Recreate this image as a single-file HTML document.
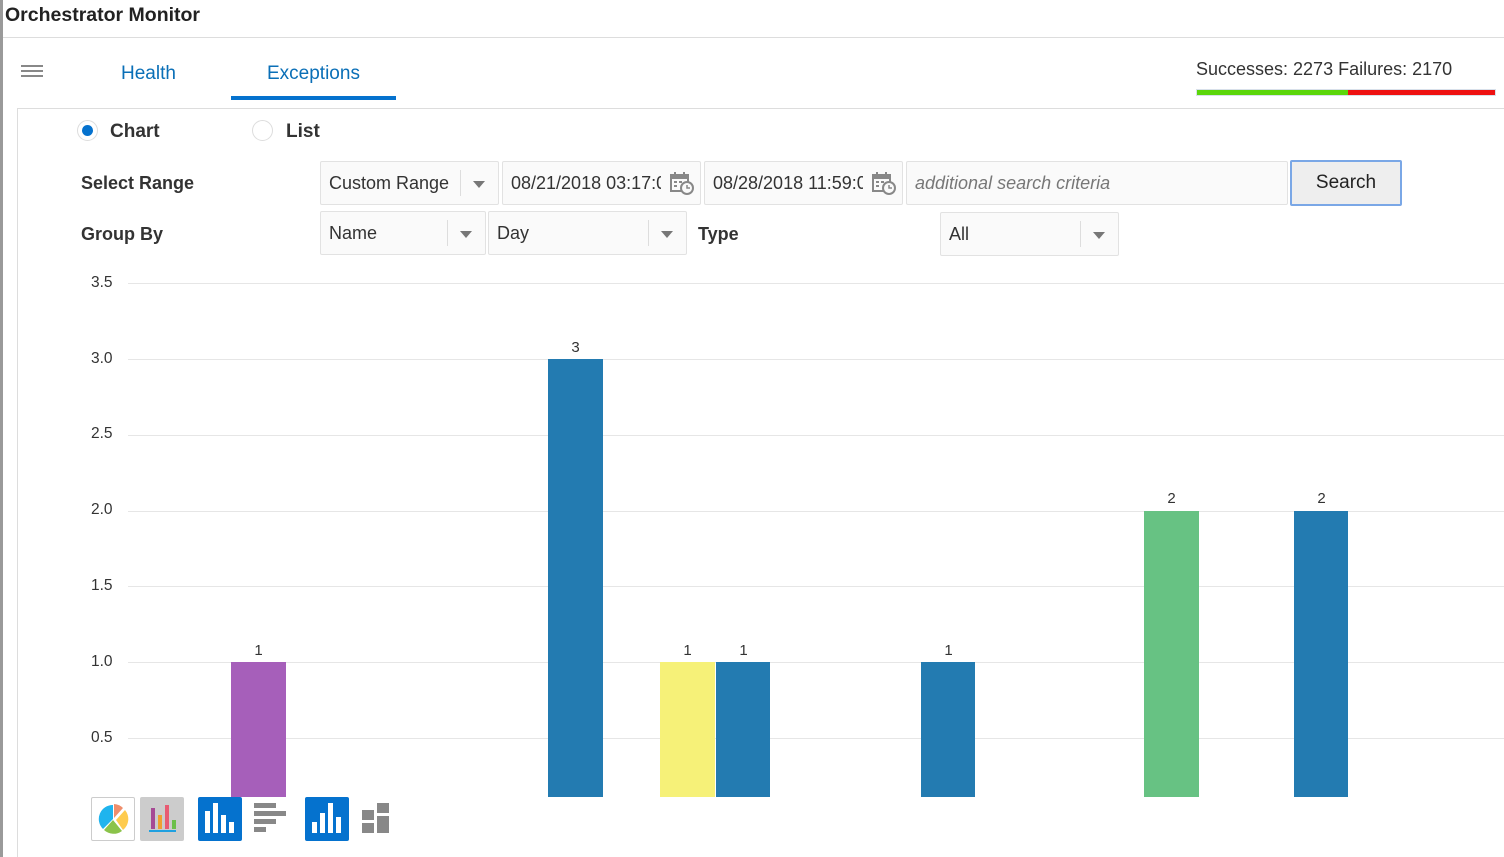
<!DOCTYPE html>
<html><head><meta charset="utf-8"><style>
*{box-sizing:border-box;margin:0;padding:0}
body{width:1504px;height:857px;overflow:hidden;background:#fff;font-family:"Liberation Sans",Arial,sans-serif;position:relative;color:#333}
.a{position:absolute}
.box{position:absolute;border:1px solid #e2e2e2;background:#fafafa;border-radius:2px;font-size:18px;color:#333;padding-left:8px;line-height:42px;white-space:nowrap;overflow:hidden}
.clip{display:inline-block;width:150px;overflow:hidden;vertical-align:top}
.dd{position:absolute;top:8px;bottom:8px;width:1px;background:#ddd}
.tri{position:absolute;width:0;height:0;border-left:6px solid transparent;border-right:6px solid transparent;border-top:7px solid #777}
.lbl{position:absolute;font-size:18px;font-weight:bold;color:#333}
.yl{position:absolute;left:91px;font-size:15.5px;color:#333}
.gl{position:absolute;left:128px;right:0;height:1px;background:#e6e6e6}
.bar{position:absolute;bottom:60px}
.bl{position:absolute;font-size:15px;color:#333;width:55px;text-align:center}
</style></head><body>
<div class="a" style="left:0;top:0;width:3px;height:857px;background:#9a9a9a"></div>
<div class="a" style="left:5px;top:4px;font-size:19.5px;font-weight:bold;color:#222">Orchestrator Monitor</div>
<div class="a" style="left:3px;top:37px;right:0;height:1px;background:#ddd"></div>
<div class="a" style="left:21px;top:65px;width:22px;height:2px;background:#888;box-shadow:0 5px 0 #888,0 10px 0 #888"></div>
<div class="a" style="left:121px;top:63px;font-size:19px;color:#0a6fb7">Health</div>
<div class="a" style="left:267px;top:63px;font-size:19px;color:#0a6fb7">Exceptions</div>
<div class="a" style="left:231px;top:96px;width:165px;height:4px;background:#0572ce"></div>
<div class="a" style="left:1196px;top:59px;font-size:18px;color:#333">Successes: 2273 Failures: 2170</div>
<div class="a" style="left:1196px;top:89px;width:152px;height:7px;background:#5bd60a;border:1px solid #d8e0ea;border-right:none"></div>
<div class="a" style="left:1348px;top:89px;width:148px;height:7px;background:#ee1111;border:1px solid #d8e0ea;border-left:none"></div>
<div class="a" style="left:17px;top:108px;right:0;height:1px;background:#ddd"></div>
<div class="a" style="left:17px;top:108px;width:1px;height:749px;background:#ddd"></div>
<div class="a" style="left:77px;top:120px;width:21px;height:21px;border-radius:50%;border:1px solid #ddd;background:#fff"></div>
<div class="a" style="left:82px;top:125px;width:11px;height:11px;border-radius:50%;background:#0572ce"></div>
<div class="lbl" style="left:110px;top:121px;font-size:19px">Chart</div>
<div class="a" style="left:252px;top:120px;width:21px;height:21px;border-radius:50%;border:1px solid #ddd;background:#fff"></div>
<div class="lbl" style="left:286px;top:121px;font-size:19px">List</div>
<div class="lbl" style="left:81px;top:173px">Select Range</div>
<div class="lbl" style="left:81px;top:224px">Group By</div>
<div class="lbl" style="left:698px;top:224px">Type</div>
<div class="box" style="left:320px;top:161px;width:179px;height:44px">Custom Range<div class="dd" style="left:139px"></div><div class="tri" style="left:152px;top:19px"></div></div>
<div class="box" style="left:502px;top:161px;width:199px;height:44px"><span class="clip">08/21/2018 03:17:00</span><svg class="a" style="left:167px;top:9px" width="25" height="25" viewBox="0 0 25 25"><rect x="1" y="4" width="17" height="16" fill="none" stroke="#888" stroke-width="2"/><rect x="1" y="4" width="17" height="4" fill="#888"/><path d="M5 1v5M14 1v5M4 11h3M9 11h3M4 15h3" stroke="#888" stroke-width="2"/><circle cx="17" cy="17" r="6" fill="#fafafa" stroke="#888" stroke-width="2"/><path d="M17 14v3h3" stroke="#888" stroke-width="1.5" fill="none"/></svg></div>
<div class="box" style="left:704px;top:161px;width:199px;height:44px"><span class="clip">08/28/2018 11:59:00</span><svg class="a" style="left:167px;top:9px" width="25" height="25" viewBox="0 0 25 25"><rect x="1" y="4" width="17" height="16" fill="none" stroke="#888" stroke-width="2"/><rect x="1" y="4" width="17" height="4" fill="#888"/><path d="M5 1v5M14 1v5M4 11h3M9 11h3M4 15h3" stroke="#888" stroke-width="2"/><circle cx="17" cy="17" r="6" fill="#fafafa" stroke="#888" stroke-width="2"/><path d="M17 14v3h3" stroke="#888" stroke-width="1.5" fill="none"/></svg></div>
<div class="box" style="left:906px;top:161px;width:382px;height:44px;font-style:italic;color:#777">additional search criteria</div>
<div class="a" style="left:1290px;top:160px;width:112px;height:46px;border:2px solid #7aa7e6;background:#eee;border-radius:2px;font-size:19px;color:#222;text-align:center;line-height:42px">Search</div>
<div class="box" style="left:320px;top:211px;width:166px;height:44px">Name<div class="dd" style="left:126px"></div><div class="tri" style="left:139px;top:19px"></div></div>
<div class="box" style="left:488px;top:211px;width:199px;height:44px">Day<div class="dd" style="left:159px"></div><div class="tri" style="left:172px;top:19px"></div></div>
<div class="box" style="left:940px;top:212px;width:179px;height:44px">All<div class="dd" style="left:139px"></div><div class="tri" style="left:152px;top:19px"></div></div>

<div class="gl" style="top:283px"></div><div class="yl" style="top:274px">3.5</div>
<div class="gl" style="top:359px"></div><div class="yl" style="top:350px">3.0</div>
<div class="gl" style="top:435px"></div><div class="yl" style="top:425px">2.5</div>
<div class="gl" style="top:511px"></div><div class="yl" style="top:501px">2.0</div>
<div class="gl" style="top:586px"></div><div class="yl" style="top:577px">1.5</div>
<div class="gl" style="top:662px"></div><div class="yl" style="top:653px">1.0</div>
<div class="gl" style="top:738px"></div><div class="yl" style="top:729px">0.5</div>

<div class="bar" style="left:231px;width:55px;top:662px;background:#a65fba"></div><div class="bl" style="left:231px;top:642px">1</div>
<div class="bar" style="left:548px;width:55px;top:359px;background:#237bb1"></div><div class="bl" style="left:548px;top:339px">3</div>
<div class="bar" style="left:660px;width:55px;top:662px;background:#f6f178"></div><div class="bl" style="left:660px;top:642px">1</div>
<div class="bar" style="left:716px;width:54px;top:662px;background:#237bb1"></div><div class="bl" style="left:716px;top:642px">1</div>
<div class="bar" style="left:921px;width:54px;top:662px;background:#237bb1"></div><div class="bl" style="left:921px;top:642px">1</div>
<div class="bar" style="left:1144px;width:55px;top:511px;background:#67c283"></div><div class="bl" style="left:1144px;top:490px">2</div>
<div class="bar" style="left:1294px;width:54px;top:511px;background:#237bb1"></div><div class="bl" style="left:1294px;top:490px">2</div>

<div class="a" style="left:91px;top:797px;width:44px;height:44px;border:1px solid #ccc;border-radius:2px;background:#fff"></div>
<svg class="a" style="left:97px;top:803px" width="32" height="32" viewBox="0 0 32 32"><path d="M16 16L16 2A14 14 0 0 0 6 26Z" fill="#1fb4ee"/><path d="M17 15L17 1A14 14 0 0 1 26 5Z" fill="#ef8e6c"/><path d="M19 17L28 7A14 14 0 0 1 26 27Z" fill="#fecb4e"/><path d="M16 17L25 28A14 14 0 0 1 7 27Z" fill="#8bc34a"/></svg>
<div class="a" style="left:140px;top:797px;width:44px;height:44px;background:#ccc;border-radius:2px"></div>
<div class="a" style="left:151px;top:808px;width:4px;height:21px;background:#a64a94"></div>
<div class="a" style="left:158px;top:815px;width:4px;height:14px;background:#f0a030"></div>
<div class="a" style="left:165px;top:805px;width:4px;height:24px;background:#e85b72"></div>
<div class="a" style="left:172px;top:820px;width:4px;height:9px;background:#6cbf4a"></div>
<div class="a" style="left:149px;top:830px;width:27px;height:2px;background:#1fa0e0"></div>
<div class="a" style="left:198px;top:797px;width:44px;height:44px;background:#0572ce;border-radius:2px"></div>
<div class="a" style="left:205px;top:811px;width:5px;height:22px;background:#fff"></div>
<div class="a" style="left:213px;top:803px;width:5px;height:30px;background:#fff"></div>
<div class="a" style="left:221px;top:815px;width:5px;height:18px;background:#fff"></div>
<div class="a" style="left:229px;top:822px;width:5px;height:11px;background:#fff"></div>
<div class="a" style="left:254px;top:803px;width:22px;height:5px;background:#888"></div>
<div class="a" style="left:254px;top:811px;width:32px;height:5px;background:#888"></div>
<div class="a" style="left:254px;top:819px;width:22px;height:5px;background:#888"></div>
<div class="a" style="left:254px;top:827px;width:12px;height:5px;background:#888"></div>
<div class="a" style="left:305px;top:797px;width:44px;height:44px;background:#0572ce;border-radius:2px"></div>
<div class="a" style="left:312px;top:822px;width:5px;height:11px;background:#fff"></div>
<div class="a" style="left:320px;top:813px;width:5px;height:20px;background:#fff"></div>
<div class="a" style="left:328px;top:803px;width:5px;height:30px;background:#fff"></div>
<div class="a" style="left:336px;top:817px;width:5px;height:16px;background:#fff"></div>
<div class="a" style="left:362px;top:810px;width:12px;height:10px;background:#888"></div>
<div class="a" style="left:362px;top:823px;width:12px;height:10px;background:#888"></div>
<div class="a" style="left:377px;top:803px;width:12px;height:10px;background:#888"></div>
<div class="a" style="left:377px;top:816px;width:12px;height:17px;background:#888"></div>
</body></html>
